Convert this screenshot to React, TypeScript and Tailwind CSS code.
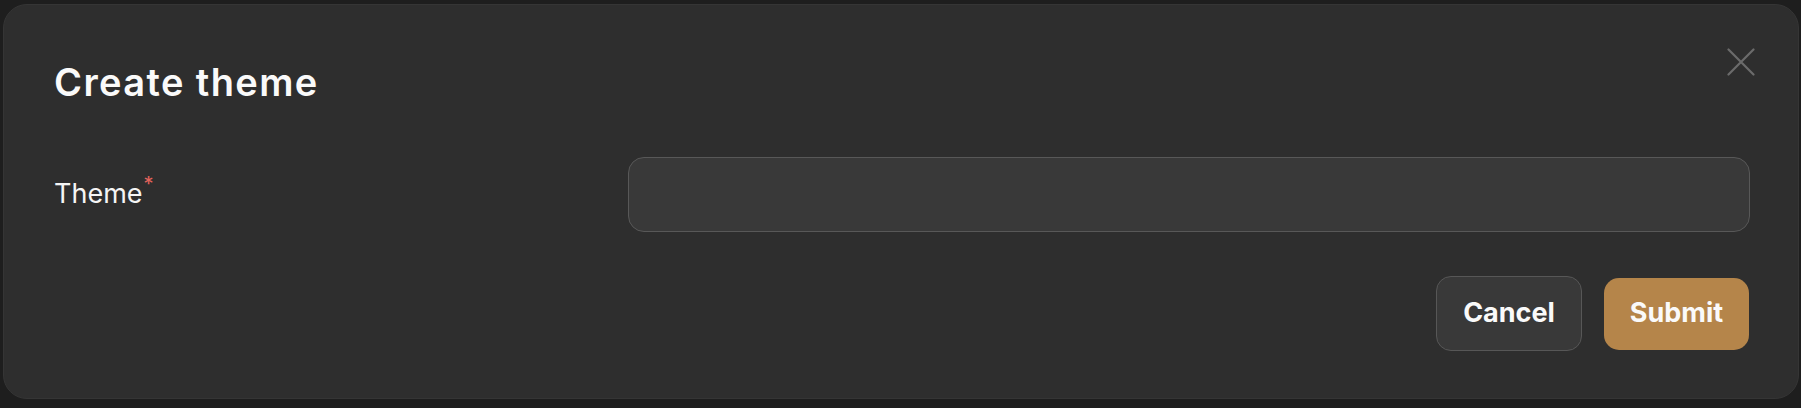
export default function App() {
  return (
    <div
      className="h-[408px] w-full overflow-hidden bg-[#1e1e1e] pl-[3px] pr-[2px] pt-[4px]"
      style={{ fontFamily: 'Inter, "Noto Sans", sans-serif' }}
    >
      <div className="relative flex h-[395px] flex-col rounded-[24px] border border-[#353535] bg-[#2e2e2e] pl-[50px] pr-[48px] pt-[58px]">
        <h2 className="text-[38px] font-semibold leading-[38px] tracking-[1.4px] text-[#fafafa]">
          Create theme
        </h2>

        {/* close */}
        <button
          type="button"
          aria-label="Close"
          className="absolute right-[43px] top-[43px] flex h-[28px] w-[28px] items-center justify-center text-[#6b6b6b]"
        >
          <svg width="28" height="28" viewBox="0 0 28 28" fill="none" stroke="currentColor" strokeWidth="2.2" strokeLinecap="round">
            <path d="M1.5 1.5 26.5 26.5M26.5 1.5 1.5 26.5" />
          </svg>
        </button>

        <div className="mt-[56px] flex items-center">
          <label className="w-[574px] shrink-0 text-[27px] leading-[28px] text-[#f5f5f5]">
            Theme
            <span className="relative -top-[12px] ml-[1px] text-[20px] text-[#e5635c]">*</span>
          </label>
          <input
            type="text"
            className="h-[75px] flex-1 rounded-[16px] border-[1.5px] border-[#585858] bg-[#393939] px-5 text-[26px] text-white outline-none"
          />
        </div>

        <div className="mt-[44px] flex items-center justify-end gap-[22px] pr-[1px]">
          <button
            type="button"
            className="flex h-[75px] w-[146px] items-center justify-center rounded-[15px] border-[1.5px] border-[#575757] bg-[#393939] text-[27px] font-bold text-[#fafafa]"
          >
            Cancel
          </button>
          <button
            type="button"
            className="flex h-[72px] w-[145px] items-center justify-center rounded-[15px] bg-[#b5854a] text-[27px] font-bold text-[#fafafa]"
          >
            Submit
          </button>
        </div>
      </div>
    </div>
  );
}
